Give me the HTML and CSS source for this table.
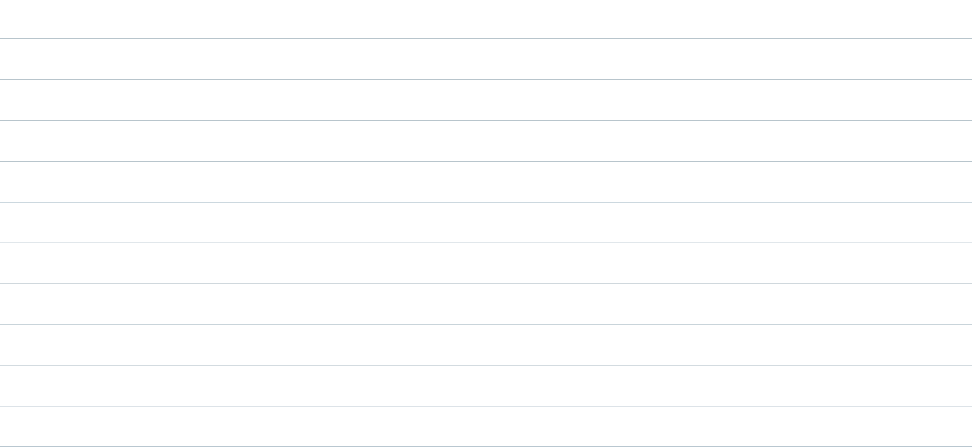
FILE: index.html
```html
<!DOCTYPE html>
<html>
<head>
<meta charset="utf-8">
<link rel="stylesheet" href="styles.css">
</head>
<body>
<div class="grid">
  <div class="row r1"></div>
  <div class="row r2"></div>
  <div class="row r3"></div>
  <div class="row r4"></div>
  <div class="row r5"></div>
  <div class="row r6 short"></div>
  <div class="row r7"></div>
  <div class="row r8"></div>
  <div class="row r9"></div>
  <div class="row r10"></div>
  <div class="row r11 short"></div>
</div>
</body>
</html>
```
FILE: styles.css
```css
html, body {
  margin: 0;
  padding: 0;
  background: #ffffff;
}
.grid {
  width: 972px;
  padding-top: 38px;
  display: flex;
  flex-direction: column;
}
.row {
  box-sizing: border-box;
  height: 41px;
  border-top: 1px solid #b9c6cd;
}
.row.short { }
.r1, .r2, .r3, .r4 { border-top-color: #b8c5cc; }
.r5 { border-top-color: #ccd8df; height: 40px; }
.r6 { border-top-color: #e1e7eb; }
.r7 { border-top-color: #d0d8dd; }
.r8 { border-top-color: #c9d4da; }
.r9 { border-top-color: #d3dbe0; }
.r10 { border-top-color: #dde3e8; height: 40px; }
.r11 { border-top-color: #b9c7d0; height: 2px; }
```
